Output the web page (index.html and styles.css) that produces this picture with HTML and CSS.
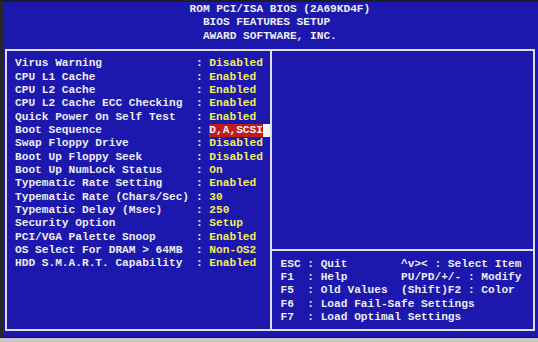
FILE: index.html
```html
<!DOCTYPE html>
<html lang="en">
<head>
    <meta charset="UTF-8">
    <meta name="viewport" content="width=device-width, initial-scale=1.0">
    <title>BIOS Features Setup</title>
    <link rel="stylesheet" href="styles.css">
</head>
<body>
    <div class="screen">
        <pre class="title">ROM PCI/ISA BIOS (2A69KD4F)
  BIOS FEATURES SETUP
  AWARD SOFTWARE, INC.</pre>

        <div class="box">
            <div class="options">
                <div class="row"><span>Virus Warning</span><span>:</span><span class="value">Disabled</span></div>
                <div class="row"><span>CPU L1 Cache</span><span>:</span><span class="value">Enabled</span></div>
                <div class="row"><span>CPU L2 Cache</span><span>:</span><span class="value">Enabled</span></div>
                <div class="row"><span>CPU L2 Cache ECC Checking</span><span>:</span><span class="value">Enabled</span></div>
                <div class="row"><span>Quick Power On Self Test</span><span>:</span><span class="value">Enabled</span></div>
                <div class="row"><span>Boot Sequence</span><span>:</span><span class="value"><span class="selected">D,A,SCSI</span><span class="cursor">&nbsp;</span></span></div>
                <div class="row"><span>Swap Floppy Drive</span><span>:</span><span class="value">Disabled</span></div>
                <div class="row"><span>Boot Up Floppy Seek</span><span>:</span><span class="value">Disabled</span></div>
                <div class="row"><span>Boot Up NumLock Status</span><span>:</span><span class="value">On</span></div>
                <div class="row"><span>Typematic Rate Setting</span><span>:</span><span class="value">Enabled</span></div>
                <div class="row"><span>Typematic Rate (Chars/Sec)</span><span>:</span><span class="value">30</span></div>
                <div class="row"><span>Typematic Delay (Msec)</span><span>:</span><span class="value">250</span></div>
                <div class="row"><span>Security Option</span><span>:</span><span class="value">Setup</span></div>
                <div class="row"><span>PCI/VGA Palette Snoop</span><span>:</span><span class="value">Enabled</span></div>
                <div class="row"><span>OS Select For DRAM &gt; 64MB</span><span>:</span><span class="value">Non-OS2</span></div>
                <div class="row"><span>HDD S.M.A.R.T. Capability</span><span>:</span><span class="value">Enabled</span></div>
            </div>
            <div class="side">
                <div class="info"></div>
                <pre class="help">ESC : Quit        ^v&gt;&lt; : Select Item
F1  : Help        PU/PD/+/- : Modify
F5  : Old Values  (Shift)F2 : Color
F6  : Load Fail-Safe Settings
F7  : Load Optimal Settings</pre>
            </div>
        </div>
    </div>
</body>
</html>
```

FILE: styles.css
```css
:root {
    --cw: 6.703px;
    --lh: 13.33px;
}
html, body {
    margin: 0;
    padding: 0;
}
body {
    width: 538px;
    height: 342px;
    overflow: hidden;
    background-color: #c6c6c6;
    font-family: "Liberation Mono", "DejaVu Sans Mono", monospace;
    font-weight: bold;
    font-size: 11.17px;
    line-height: var(--lh);
    color: #ececf0;
}
pre {
    margin: 0;
    font: inherit;
}
.screen {
    box-sizing: border-box;
    height: 338px;
    background-color: #1c18ae;
    border-top: 2px solid #1e1e22;
    border-left: 3px solid #26262a;
    border-bottom: 1px solid #18181c;
}
.title {
    padding: 0.85px 0 0 186.5px;
}
.box {
    box-sizing: border-box;
    width: 530px;
    height: 282px;
    margin: 6.15px 0 0 2px;
    border: 2px solid #dcdcec;
    display: grid;
    grid-template-columns: 265px 1fr;
}
.options {
    border-right: 2px solid #dcdcec;
    padding: 6.5px 0 0 8px;
}
.row {
    display: grid;
    grid-template-columns: calc(var(--cw) * 27) calc(var(--cw) * 2) auto;
    white-space: pre;
}
.value {
    color: #f2ee5a;
}
.selected {
    display: inline-block;
    height: var(--lh);
    background-color: #c01c1c;
    color: #f4f4f4;
}
.cursor {
    display: inline-block;
    width: var(--cw);
    height: var(--lh);
    background-color: #f4f4f8;
}
.side {
    display: flex;
    flex-direction: column;
}
.info {
    height: 198.5px;
    border-bottom: 2px solid #dcdcec;
}
.help {
    padding: 6.3px 0 0 8.5px;
}
```
